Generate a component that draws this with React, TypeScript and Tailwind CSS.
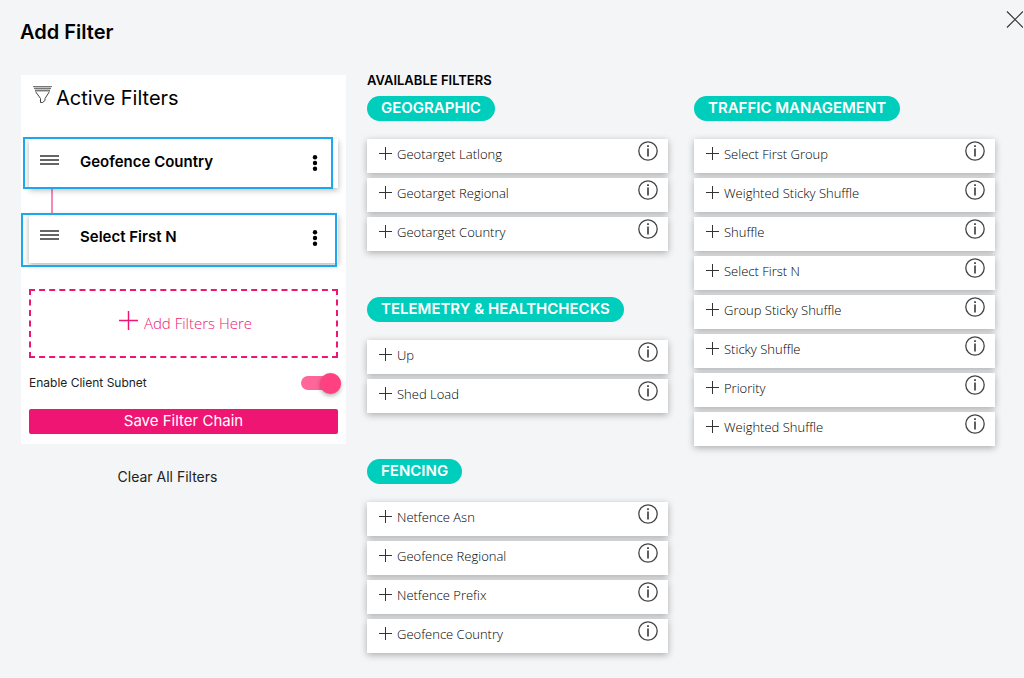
import { useState } from "react";

const traffic = [
  "Select First Group",
  "Weighted Sticky Shuffle",
  "Shuffle",
  "Select First N",
  "Group Sticky Shuffle",
  "Sticky Shuffle",
  "Priority",
  "Weighted Shuffle",
];

function FunnelIcon() {
  return (
    <svg width="19" height="18" viewBox="0 0 19 18" fill="none" stroke="#444" strokeWidth="1" aria-hidden="true">
      <path d="M0 0H19L16 6H3Z" fill="#c4c4c4" stroke="none" />
      <path d="M0 0.5H19M1 2.5H18M2 4.5H17" stroke="#777" />
      <path d="M2.5 5.5L7.5 12.5V16.5H9.5L12 14.5V12.5L16.5 5.5" />
    </svg>
  );
}

function PlusIcon({ className }: { className: string }) {
  return (
    <svg className={className} viewBox="0 0 13 13" fill="none" stroke="currentColor" aria-hidden="true">
      <path d="M6.5 0V13M0 6.5H13" />
    </svg>
  );
}

function InfoIcon() {
  return (
    <svg width="20" height="20" viewBox="0 0 20 20" fill="none" stroke="#444" aria-hidden="true">
      <circle cx="10" cy="10" r="9.2" strokeWidth="1.3" />
      <path d="M10 7.5V15.5" strokeWidth="1.7" />
      <path d="M10 4.3V6.1" strokeWidth="1.8" />
    </svg>
  );
}

function FilterGroup({ title, items }: { title: string; items: string[] }) {
  return (
    <section className="flex flex-col items-start gap-[18px]">
      <h3 className="flex h-[25px] items-center rounded-full bg-[#00cebc] px-3.5 text-[15px] font-semibold whitespace-nowrap text-white">
        {title}
      </h3>
      <ul className="flex w-full flex-col gap-[5px]">
        {items.map((item) => (
          <li
            key={item}
            className="flex h-[34px] items-start justify-between bg-white pr-2.5 pl-3 font-['Open_Sans',sans-serif] text-[13px] font-light text-black shadow-[0_2px_7px_rgba(0,0,0,0.3)]"
          >
            <button type="button" className="flex h-8 items-center gap-[5px] whitespace-nowrap">
              <PlusIcon className="mb-1 size-[13px] text-[#333]" />
              {item}
            </button>
            <button type="button" aria-label={`About ${item}`} className="pt-0.5">
              <InfoIcon />
            </button>
          </li>
        ))}
      </ul>
    </section>
  );
}

function ActiveFilter({ name, outline }: { name: string; outline: string }) {
  return (
    <div className="relative flex h-[49px] items-center bg-white pr-5 pb-0.5 pl-[11px] shadow-[0_2px_6px_rgba(0,0,0,0.3)]">
      <svg className="mb-1.5 shrink-0" width="19" height="10" viewBox="0 0 19 10" stroke="#333" strokeWidth="1.5" aria-hidden="true">
        <path d="M0 1H19M0 5H19M0 9H19" />
      </svg>
      <span className="ml-[21px] grow text-[15px] font-semibold whitespace-nowrap">{name}</span>
      <button type="button" aria-label={`Options for ${name}`}>
        <svg width="6" height="16" viewBox="0 0 6 16" aria-hidden="true">
          <circle cx="3" cy="2.3" r="2.2" />
          <circle cx="3" cy="8" r="2.2" />
          <circle cx="3" cy="13.7" r="2.2" />
        </svg>
      </button>
      <span className={`pointer-events-none absolute border-2 border-[#1aa8ee] ${outline}`} />
    </div>
  );
}

export default function App() {
  const [subnet, setSubnet] = useState(true);
  return (
    <main className="min-h-screen bg-[#f3f5f7] pb-6 font-['Inter',sans-serif] text-black">
      <header className="flex items-start justify-between pt-2.5 pl-5">
        <h1 className="pt-2 text-xl leading-7 font-semibold">Add Filter</h1>
        <button type="button" aria-label="Close" className="pr-px">
          <svg width="17" height="19" viewBox="0 0 17 19" stroke="#333" strokeWidth="1.1" aria-hidden="true">
            <path d="M1 1.5L17 17.5M17 1.5L1 17.5" />
          </svg>
        </button>
      </header>

      <div className="grid grid-cols-[325fr_628fr] gap-[21px] pt-[25px] pr-[29px] pl-[21px]">
        <aside className="min-w-0 pt-1">
          <div className="bg-white px-2 pb-2.5">
            <h2 className="flex h-16 items-start gap-1 pt-[11px] pl-1 text-xl leading-6">
              <FunnelIcon />
              Active Filters
            </h2>
            <ActiveFilter name="Geofence Country" outline="-top-0.5 right-[5px] -bottom-px -left-1.5" />
            <div className="ml-[22px] h-[26px] w-0.5 bg-[#f888b8]" />
            <ActiveFilter name="Select First N" outline="-top-px right-px -bottom-1 -left-2" />
            <button
              type="button"
              className="mt-[26px] flex h-[69px] w-full items-center justify-center gap-1.5 border-2 border-dashed border-[#ee1672] pl-1 font-['Open_Sans',sans-serif] text-[15px] font-light text-[#ee1672]"
            >
              <PlusIcon className="mb-1.5 size-[19px]" />
              Add Filters Here
            </button>
            <label className="relative flex h-[50px] items-center justify-between text-xs text-[#222]">
              Enable Client Subnet
              <input
                type="checkbox"
                role="switch"
                checked={subnet}
                onChange={(e) => setSubnet(e.target.checked)}
                className="peer sr-only"
              />
              <span className="-mr-[3px] flex h-[14px] w-10 items-center rounded-full bg-[#ff6699] peer-checked:justify-end">
                <span className="size-[21px] rounded-full bg-[#ff4081] shadow-[0_2px_4px_rgba(0,0,0,0.3)]" />
              </span>
            </label>
            <button type="button" className="h-[25px] w-full rounded-xs bg-[#ee1672] text-[15px] leading-6 text-white">
              Save Filter Chain
            </button>
          </div>
          <div className="pt-5 pr-8 text-center">
            <button type="button" className="text-sm leading-6 text-[#222]">
              Clear All Filters
            </button>
          </div>
        </aside>

        <div className="min-w-0">
          <h2 className="h-[25px] text-[13px] leading-[18px] font-semibold">AVAILABLE FILTERS</h2>
          <div className="grid grid-cols-2 items-start gap-[26px]">
            <div className="flex flex-col gap-[46px]">
              <FilterGroup title="GEOGRAPHIC" items={["Geotarget Latlong", "Geotarget Regional", "Geotarget Country"]} />
              <FilterGroup title="TELEMETRY &amp; HEALTHCHECKS" items={["Up", "Shed Load"]} />
              <FilterGroup
                title="FENCING"
                items={["Netfence Asn", "Geofence Regional", "Netfence Prefix", "Geofence Country"]}
              />
            </div>
            <FilterGroup title="TRAFFIC MANAGEMENT" items={traffic} />
          </div>
        </div>
      </div>
    </main>
  );
}
